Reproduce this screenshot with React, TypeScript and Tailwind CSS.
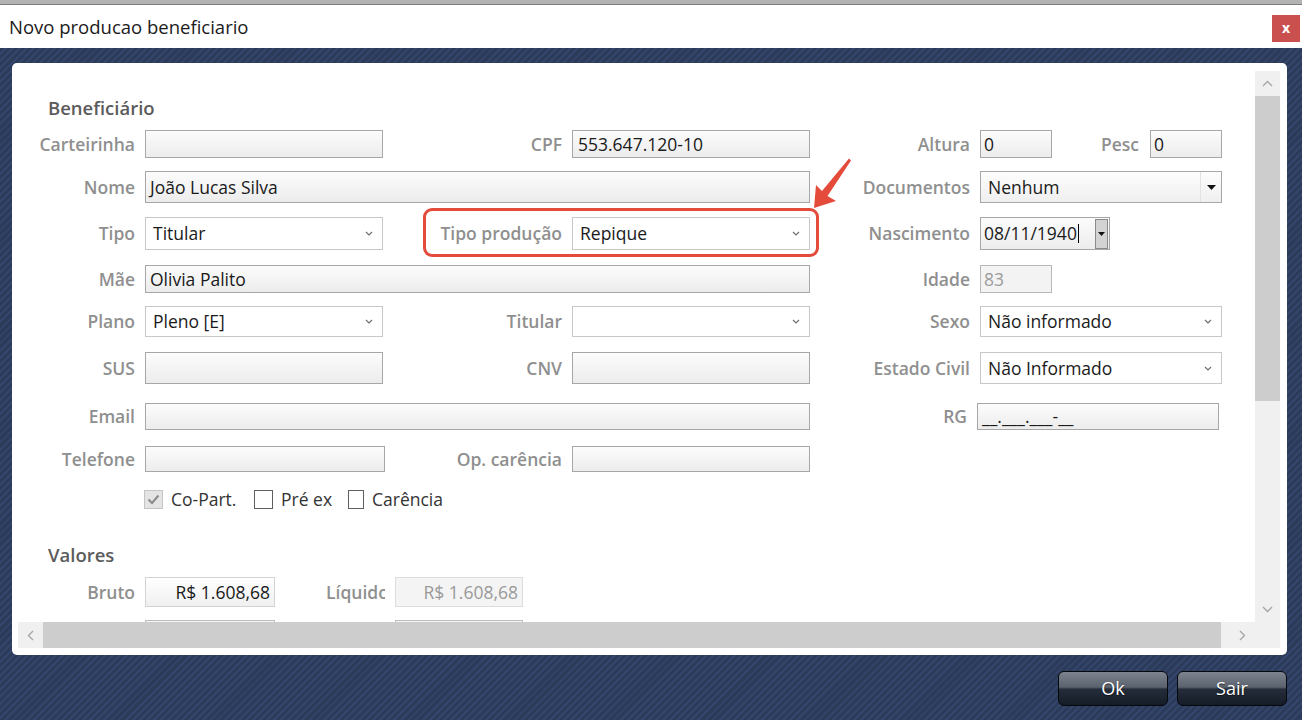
import React from "react";

const Chevron = ({ color = "#6f6f6f" }: { color?: string }) => (
  <svg width="8" height="5" viewBox="0 0 8 5" fill="none">
    <path d="M1 1L4 4L7 1" stroke={color} strokeWidth="1.2" />
  </svg>
);

const Tri = () => (
  <svg width="9" height="5" viewBox="0 0 9 5">
    <path d="M0 0H9L4.5 5Z" fill="#111" />
  </svg>
);

function Label({ children, className = "" }: { children?: React.ReactNode; className?: string }) {
  return (
    <div
      className={
        "flex items-center justify-end pr-[10px] text-[17.5px] font-semibold text-[#8f8f8f] whitespace-nowrap " +
        className
      }
    >
      {children}
    </div>
  );
}

function TextBox({ value = "", className = "" }: { value?: string; className?: string }) {
  return (
    <div
      className={
        "flex h-full items-center border border-[#a7a7a7] bg-gradient-to-b from-[#fcfcfc] to-[#ececec] px-[4px] text-[17.5px] text-[#1a1a1a] whitespace-nowrap overflow-hidden " +
        className
      }
    >
      {value}
    </div>
  );
}

function Select({ value = "", className = "" }: { value?: string; className?: string }) {
  return (
    <div
      className={
        "flex h-full items-center justify-between border border-[#c8c8c8] bg-white pl-[7px] pr-[9px] text-[17.5px] text-[#1a1a1a] whitespace-nowrap " +
        className
      }
    >
      <span>{value}</span>
      <Chevron />
    </div>
  );
}

function CheckBox({ checked = false }: { checked?: boolean }) {
  return checked ? (
    <div className="flex h-[19px] w-[19px] items-center justify-center border border-[#c4c4c4] bg-[#e4e4e4]">
      <svg width="13" height="11" viewBox="0 0 13 11" fill="none">
        <path d="M1.5 5.5L5 9L11.5 1.5" stroke="#8a8a8a" strokeWidth="2" />
      </svg>
    </div>
  ) : (
    <div className="h-[19px] w-[19px] border border-[#5f5f5f] bg-white" />
  );
}

const cols = "grid grid-cols-[127px_238px_189px_238px_170px_242px]";

export default function App() {
  return (
    <div className="relative h-[720px] w-[1302px] overflow-hidden bg-white font-['Open_Sans',sans-serif]">
      {/* top strip */}
      <div className="h-[5px] border-b border-[#7c7c7c] bg-[#b3b3b3]" />
      {/* title bar */}
      <div className="flex h-[43px] items-center justify-between bg-white pl-[9px] pr-[2px]">
        <span className="text-[18.5px] text-[#1b1b1b]">Novo producao beneficiario</span>
        <div className="mt-[3px] flex h-[27px] w-[28px] items-center justify-center bg-[#c9504f] text-[14px] font-bold leading-none text-white">
          x
        </div>
      </div>

      {/* navy area */}
      <div className="flex h-[672px] flex-col bg-[#2c3d5b] bg-[repeating-linear-gradient(135deg,#2b3b59_0px,#2b3b59_3px,#33456a_3px,#33456a_5px)] pl-[12px] pr-[15px] pt-[15px]">
        {/* panel */}
        <div className="h-[592px] w-[1275px] rounded-[5px] bg-white pb-[7px] pl-[6px] pr-[7px] pt-[8px]">
          <div className="grid h-[577px] grid-cols-[1237px_25px] grid-rows-[551px_26px]">
            {/* content */}
            <div className="relative overflow-hidden">
              <div className="ml-[30px] mt-[25px] h-[24px] text-[18.5px] font-semibold leading-[24px] text-[#5b5b5b]">
                Beneficiário
              </div>

              {/* row 1 */}
              <div className={cols + " mt-[10px] h-[27px]"}>
                <Label>Carteirinha</Label>
                <TextBox />
                <Label>CPF</Label>
                <TextBox value="553.647.120-10" className="pl-[5px]" />
                <Label>Altura</Label>
                <div className="flex h-full">
                  <TextBox value="0" className="w-[72px] pl-[3px]" />
                  <Label className="flex-1 pr-[11px]">Pesc</Label>
                  <TextBox value="0" className="w-[72px] pl-[3px]" />
                </div>
              </div>

              {/* row 2 */}
              <div className={cols + " mt-[14px] h-[32px]"}>
                <Label>Nome</Label>
                <TextBox value="João Lucas Silva" className="col-span-3" />
                <Label>Documentos</Label>
                <div className="flex h-full items-center border border-[#a7a7a7] bg-gradient-to-b from-[#fdfdfd] to-[#efefef] text-[17.5px] text-[#1a1a1a]">
                  <span className="flex-1 pl-[7px]">Nenhum</span>
                  <div className="flex h-full w-[21px] items-center justify-center border-l border-[#e2e2e2]">
                    <Tri />
                  </div>
                </div>
              </div>

              {/* row 3 */}
              <div className={cols + " mt-[14px] h-[33px]"}>
                <Label>Tipo</Label>
                <Select value="Titular" />
                <Label>Tipo produção</Label>
                <Select value="Repique" />
                <Label>Nascimento</Label>
                <div className="flex h-full w-[130px] items-center border border-[#a7a7a7] bg-gradient-to-b from-[#fcfcfc] to-[#ececec] pl-[3px] text-[17.5px] text-[#1a1a1a]">
                  <span>08/11/1940</span>
                  <span className="ml-[1px] h-[19px] w-[1px] bg-black" />
                  <div className="ml-auto mr-[1px] flex h-[30px] w-[13px] items-center justify-center border border-[#8a8a8a] bg-[#d3d3d3]">
                    <svg width="7" height="4" viewBox="0 0 7 4">
                      <path d="M0 0H7L3.5 4Z" fill="#111" />
                    </svg>
                  </div>
                </div>
              </div>

              {/* row 4 */}
              <div className={cols + " mt-[15px] h-[27px]"}>
                <Label>Mãe</Label>
                <TextBox value="Olivia Palito" className="col-span-3" />
                <Label>Idade</Label>
                <div className="flex h-full w-[72px] items-center border border-[#b8b8b8] bg-[#f3f3f3] pl-[3px] text-[17.5px] text-[#9c9c9c]">
                  83
                </div>
              </div>

              {/* row 5 */}
              <div className={cols + " mt-[14px] h-[31px]"}>
                <Label>Plano</Label>
                <Select value="Pleno [E]" />
                <Label>Titular</Label>
                <Select value="" />
                <Label>Sexo</Label>
                <Select value="Não informado" />
              </div>

              {/* row 6 */}
              <div className={cols + " mt-[15px] h-[32px]"}>
                <Label>SUS</Label>
                <TextBox />
                <Label>CNV</Label>
                <TextBox />
                <Label>Estado Civil</Label>
                <Select value="Não Informado" />
              </div>

              {/* row 7 */}
              <div className={cols + " mt-[19px] h-[27px]"}>
                <Label>Email</Label>
                <TextBox className="col-span-3" />
                <Label className="pr-[13px]">RG</Label>
                <TextBox value="__.___.___-__" className="ml-[-3px] w-[242px] pl-[4px]" />
              </div>

              {/* row 8 */}
              <div className={cols + " mt-[16px] h-[26px]"}>
                <Label>Telefone</Label>
                <TextBox className="w-[240px]" />
                <Label>Op. carência</Label>
                <TextBox />
              </div>

              {/* checkboxes */}
              <div className="ml-[126px] mt-[16px] flex h-[22px] items-center text-[17.5px] text-[#333]">
                <div className="flex w-[110px] items-center gap-[8px]">
                  <CheckBox checked />
                  <span>Co-Part.</span>
                </div>
                <div className="flex w-[94px] items-center gap-[8px]">
                  <CheckBox />
                  <span>Pré ex</span>
                </div>
                <div className="flex w-[95px] items-center gap-[8px] overflow-hidden whitespace-nowrap">
                  <CheckBox />
                  <span>Carência</span>
                </div>
              </div>

              {/* Valores */}
              <div className="ml-[30px] mt-[33px] h-[24px] text-[18.5px] font-semibold leading-[24px] text-[#5b5b5b]">
                Valores
              </div>
              <div className="mt-[10px] flex h-[30px]">
                <Label className="w-[127px]">Bruto</Label>
                <div className="flex h-full w-[130px] items-center justify-end border border-[#d3d3d3] bg-gradient-to-b from-white to-[#f0f0f0] pr-[4px] text-[17.5px] text-[#1a1a1a]">
                  R$ 1.608,68
                </div>
                <div className="ml-[51px] mr-[10px] flex w-[59px] items-center overflow-hidden whitespace-nowrap text-[17.5px] font-semibold text-[#8f8f8f]">
                  Líquido
                </div>
                <div className="flex h-full w-[128px] items-center justify-end border border-[#dcdcdc] bg-[#f4f4f4] pr-[4px] text-[17.5px] text-[#9a9a9a]">
                  R$ 1.608,68
                </div>
              </div>
              <div className="mt-[13px] flex h-[30px]">
                <div className="w-[127px]" />
                <div className="h-full w-[130px] border border-[#bdbdbd] bg-[#f6f6f6]" />
                <div className="w-[120px]" />
                <div className="h-full w-[128px] border border-[#bdbdbd] bg-[#f6f6f6]" />
              </div>
            </div>

            {/* vertical scrollbar */}
            <div className="flex flex-col bg-[#f0f0f0]">
              <div className="flex h-[25px] items-center justify-center">
                <svg width="11" height="7" viewBox="0 0 11 7" fill="none">
                  <path d="M1 6L5.5 1.5L10 6" stroke="#a6a6a6" strokeWidth="1.4" />
                </svg>
              </div>
              <div className="h-[305px] bg-[#cdcdcd]" />
              <div className="flex-1" />
              <div className="flex h-[25px] items-center justify-center">
                <svg width="11" height="7" viewBox="0 0 11 7" fill="none">
                  <path d="M1 1L5.5 5.5L10 1" stroke="#a6a6a6" strokeWidth="1.4" />
                </svg>
              </div>
            </div>

            {/* horizontal scrollbar */}
            <div className="flex bg-[#f0f0f0]">
              <div className="flex w-[25px] items-center justify-center">
                <svg width="7" height="11" viewBox="0 0 7 11" fill="none">
                  <path d="M6 1L1.5 5.5L6 10" stroke="#a6a6a6" strokeWidth="1.4" />
                </svg>
              </div>
              <div className="w-[1178px] bg-[#cdcdcd]" />
              <div className="flex-1" />
              <div className="flex w-[25px] items-center justify-center">
                <svg width="7" height="11" viewBox="0 0 7 11" fill="none">
                  <path d="M1 1L5.5 5.5L1 10" stroke="#a6a6a6" strokeWidth="1.4" />
                </svg>
              </div>
            </div>
            <div className="bg-[#f0f0f0]" />
          </div>
        </div>

        {/* buttons */}
        <div className="mt-[16px] flex justify-end gap-[9px]">
          {["Ok", "Sair"].map((t) => (
            <div
              key={t}
              className="flex h-[35px] w-[110px] items-center justify-center rounded-[6px] border border-[#05080d] bg-[linear-gradient(to_bottom,#7d848f_0%,#5a626e_46%,#252d3a_52%,#151c28_100%)] text-[18px] text-white [text-shadow:0_1px_1px_rgba(0,0,0,0.6)]"
            >
              {t}
            </div>
          ))}
        </div>
      </div>

      {/* annotation overlay */}
      <div className="absolute left-[423px] top-[208px] h-[49px] w-[396px] rounded-[9px] border-[3px] border-[#e44b3b]" />
      <svg className="absolute left-0 top-0" width="1302" height="720" viewBox="0 0 1302 720">
        <path
          d="M814 208 L836 201 L827.5 196 L851 160.5 L849 158.5 L822 191 L816 185 Z"
          fill="#e44b3b"
        />
      </svg>
    </div>
  );
}
